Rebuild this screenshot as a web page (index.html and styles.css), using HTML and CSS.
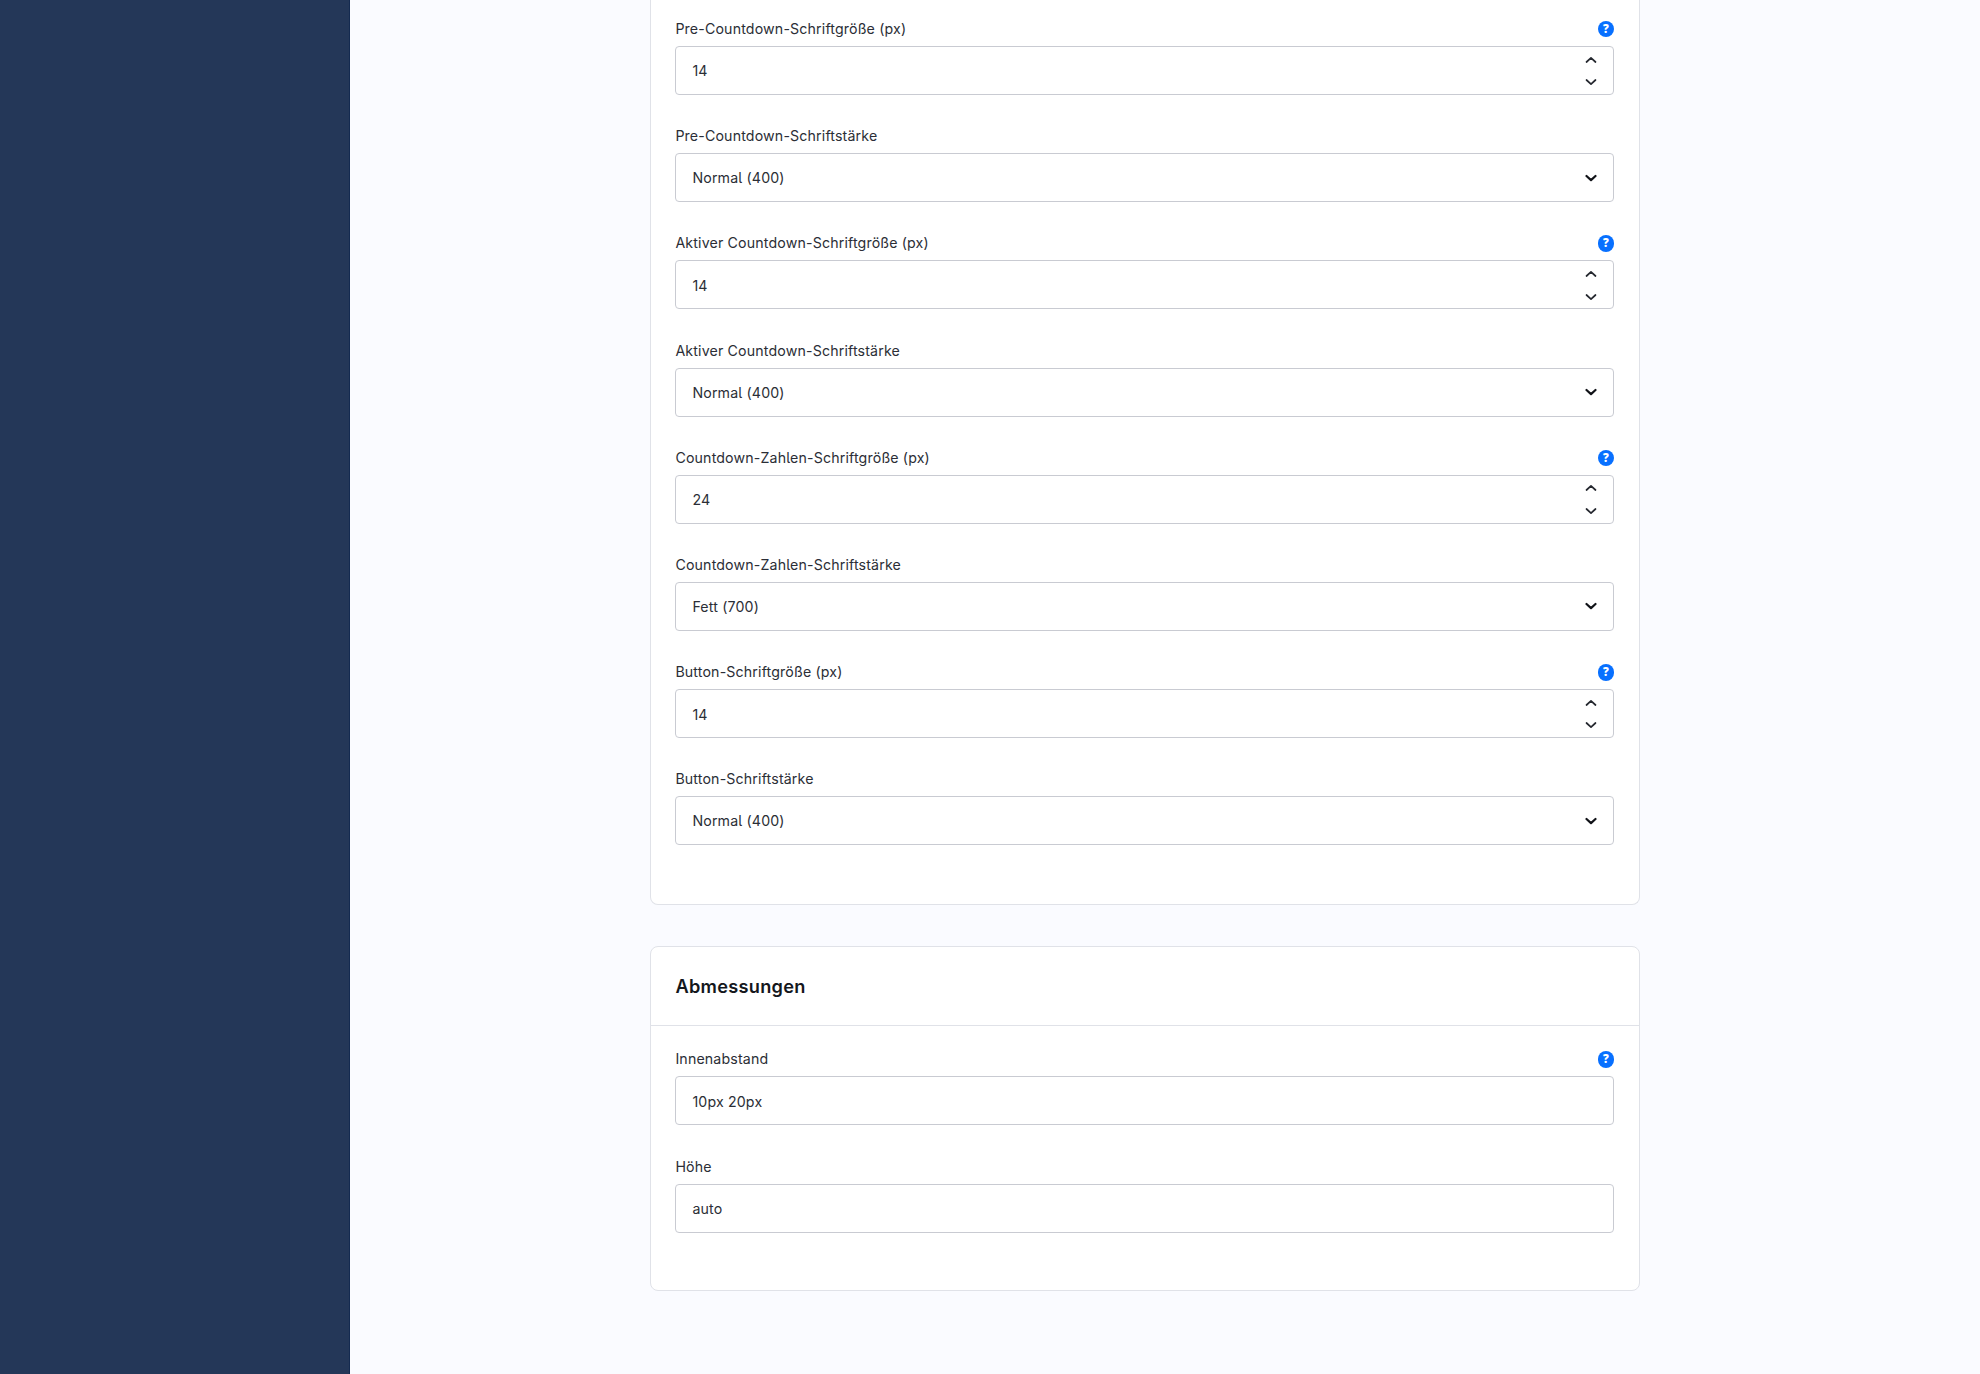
FILE: index.html
```
<!DOCTYPE html>
<html lang="de">
<head>
<meta charset="utf-8">
<title>Einstellungen</title>
<link rel="stylesheet" href="styles.css">
</head>
<body>
<svg width="0" height="0" class="sprite" aria-hidden="true">
  <symbol id="up" viewBox="0 0 12 8"><path d="M1.5 6 6 1.900 10.500 6"/></symbol>
  <symbol id="down" viewBox="0 0 12 8"><path d="M1.500 2 6 6.100 10.500 2"/></symbol>
</svg>
<div class="app">
  <aside class="sidebar"></aside>
  <main class="content">
    <section class="card card-continued">
      <div class="field"><div class="label"><span>Pre-Countdown-Schriftgröße (px)</span><b class="help">?</b></div><div class="control"><span>14</span><span class="stepper"><svg><use href="#up"/></svg><svg><use href="#down"/></svg></span></div></div>
      <div class="field"><div class="label"><span>Pre-Countdown-Schriftstärke</span></div><div class="control select"><span>Normal (400)</span><svg class="caret"><use href="#down"/></svg></div></div>
      <div class="field"><div class="label"><span>Aktiver Countdown-Schriftgröße (px)</span><b class="help">?</b></div><div class="control"><span>14</span><span class="stepper"><svg><use href="#up"/></svg><svg><use href="#down"/></svg></span></div></div>
      <div class="field"><div class="label"><span>Aktiver Countdown-Schriftstärke</span></div><div class="control select"><span>Normal (400)</span><svg class="caret"><use href="#down"/></svg></div></div>
      <div class="field"><div class="label"><span>Countdown-Zahlen-Schriftgröße (px)</span><b class="help">?</b></div><div class="control"><span>24</span><span class="stepper"><svg><use href="#up"/></svg><svg><use href="#down"/></svg></span></div></div>
      <div class="field"><div class="label"><span>Countdown-Zahlen-Schriftstärke</span></div><div class="control select"><span>Fett (700)</span><svg class="caret"><use href="#down"/></svg></div></div>
      <div class="field"><div class="label"><span>Button-Schriftgröße (px)</span><b class="help">?</b></div><div class="control"><span>14</span><span class="stepper"><svg><use href="#up"/></svg><svg><use href="#down"/></svg></span></div></div>
      <div class="field"><div class="label"><span>Button-Schriftstärke</span></div><div class="control select"><span>Normal (400)</span><svg class="caret"><use href="#down"/></svg></div></div>
    </section>
    <section class="card">
      <h2 class="card-title">Abmessungen</h2>
      <div class="card-body">
        <div class="field"><div class="label"><span>Innenabstand</span><b class="help">?</b></div><div class="control"><span>10px 20px</span></div></div>
        <div class="field"><div class="label"><span>Höhe</span></div><div class="control"><span>auto</span></div></div>
      </div>
    </section>
  </main>
</div>
</body>
</html>
```
FILE: styles.css
```
* { box-sizing: border-box; }
body { margin: 0; font-family: Inter, sans-serif; font-size: 14.200px; letter-spacing: 0.150px; font-feature-settings: "cv05"; color: #2b2e36; background: #fafbff; }
.sprite { position: absolute; }
.app { display: flex; height: 1374px; overflow: hidden; }
.sidebar { width: 350px; background: #243758; border-right: 1px solid #142a50; flex: none; }
.content { flex: 1; padding-left: 300px; display: flex; flex-direction: column; align-items: flex-start; gap: 41px; }
.card { width: 990px; flex: none; background: #fff; border: 1px solid #e0e2e8; border-radius: 8px; height: 345px; }
.card-continued { height: 905px; padding: 19px 25px 0 24.400px; border-top: 0; border-radius: 0 0 8px 8px; }
.card-title { margin: 0; height: 79px; padding: 0 24.400px 1px; display: flex; align-items: center; font-size: 18.200px; font-weight: 600; line-height: 24px; letter-spacing: 0.280px; color: #14171c; border-bottom: 1px solid #e0e2e8; }
.card-body { padding: 23.400px 25px 0 24.400px; }
.field { height: 107.200px; }
.label { height: 20.400px; margin-bottom: 6.600px; display: flex; align-items: center; justify-content: space-between; line-height: 20.400px; }
.help { width: 16.400px; height: 16.400px; border-radius: 50%; background: #0870ff; color: #fff; font-family: "Open Sans", sans-serif; font-size: 11.500px; font-weight: 800; line-height: 16.400px; letter-spacing: 0; text-align: center; }
.control { height: 49px; border: 1px solid #c9cbd2; border-radius: 4px; padding: 1px 16px 0; display: flex; align-items: center; justify-content: space-between; }
.select { padding-top: 0; }
svg { fill: none; stroke: #25282f; stroke-width: 1.700; stroke-linecap: round; stroke-linejoin: round; }
.control svg { width: 12px; height: 8px; display: block; }
.stepper { display: flex; flex-direction: column; gap: 14.600px; }
.control svg.caret { stroke: #111318; stroke-width: 2.200; }
```
